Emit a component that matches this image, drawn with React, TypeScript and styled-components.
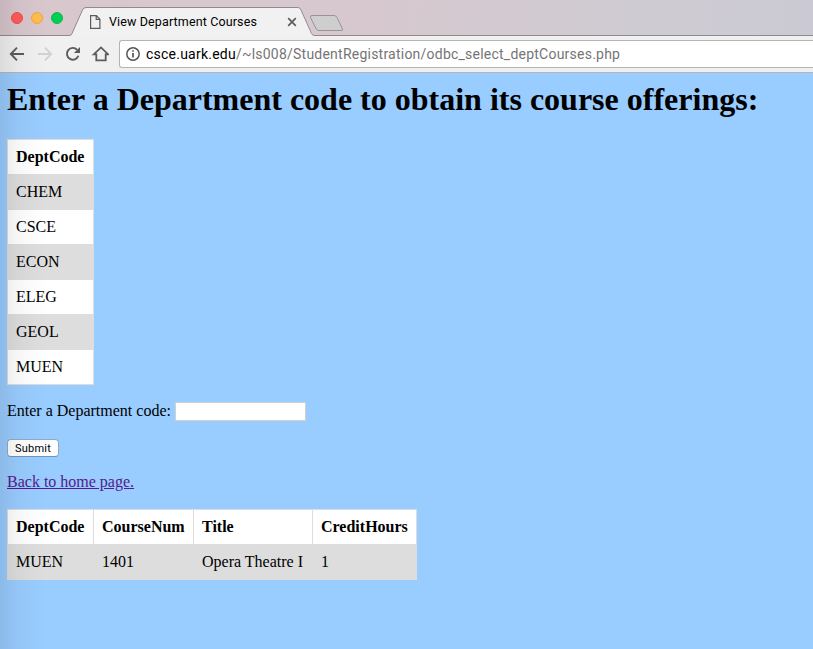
import React from "react";
import styled, { createGlobalStyle } from "styled-components";

const GlobalStyle = createGlobalStyle`
  * { box-sizing: border-box; }
  html, body { margin: 0; padding: 0; overflow: hidden; }
  body { background: #99ccff; }
`;

const Window = styled.div`
  position: relative;
  display: flex;
  flex-direction: column;
  width: 813px;
  height: 649px;
  overflow: hidden;
  color: #000;
  font: 16px/18px "Liberation Serif", "Times New Roman", serif;
  background: #99ccff;
`;

const EdgeShadow = styled.div`
  position: absolute;
  inset: 0 auto 0 0;
  width: 48px;
  pointer-events: none;
  background: linear-gradient(to right, rgba(0, 0, 0, 0.085), rgba(0, 0, 0, 0.035) 35%, rgba(0, 0, 0, 0.01) 70%, transparent);
`;

const TabStrip = styled.header`
  position: relative;
  display: flex;
  flex: none;
  height: 36px;
  background: linear-gradient(100deg, #d8c7cd 0%, #d7c8cf 45%, #cfcbd2 78%, #cbcad4 100%);
`;

const TabShapes = styled.svg`
  position: absolute;
  inset: 0;
`;

const Lights = styled.div`
  display: flex;
  gap: 8px;
  width: 90px;
  padding: 12px 0 0 11px;
`;

const Light = styled.i<{ $fill: string; $ring: string }>`
  width: 12px;
  height: 12px;
  border: 1px solid ${(p) => p.$ring};
  border-radius: 50%;
  background: ${(p) => p.$fill};
`;

const Tab = styled.div`
  position: relative;
  display: flex;
  width: 212px;
  padding-top: 14px;
`;

const TabTitle = styled.span`
  width: 178px;
  margin-left: 8px;
  font: 12.5px/16px Roboto, sans-serif;
  letter-spacing: 0.13px;
  white-space: nowrap;
`;

const Toolbar = styled.nav`
  display: flex;
  flex: none;
  height: 37px;
  padding: 4px 0 0 9px;
  border-bottom: 1px solid #b7b5b5;
  background: #f1f0f1;
`;

const NavIcons = styled.svg`
  flex: none;
  margin-right: 10px;
`;

const AddressBar = styled.div`
  display: flex;
  flex: 1;
  height: 28px;
  padding: 6px 0 0 6px;
  border: 1px solid #b5b4b5;
  border-right: 0;
  border-radius: 3px 0 0 3px;
  background: #fff;
`;

const Url = styled.span`
  margin: -1px 0 0 6px;
  color: #757575;
  font: 14px/16px Roboto, sans-serif;
  letter-spacing: 0.23px;
  white-space: nowrap;
`;

const Host = styled.span`
  color: #000;
`;

const Page = styled.main`
  display: flex;
  flex-direction: column;
  align-items: flex-start;
  padding: 8px 0 0 7px;
`;

const Heading = styled.h1`
  margin: 0 0 21px;
  font-size: 32px;
  line-height: 37px;
  white-space: nowrap;
`;

const Table = styled.table<{ $width: number }>`
  width: ${(p) => p.$width}px;
  border-collapse: collapse;
  table-layout: fixed;
`;

const Col = styled.col<{ $width: number }>`
  width: ${(p) => p.$width}px;
`;

const Row = styled.tr<{ $shaded?: boolean }>`
  height: 35px;
  background: ${(p) => (p.$shaded ? "#dddddd" : "#ffffff")};
`;

const cell = `
  padding: 8px;
  border: 1px solid #dddddd;
  text-align: left;
  white-space: nowrap;
`;
const HeadCell = styled.th`${cell}`;
const Cell = styled.td`${cell}`;

const Form = styled.form`
  display: flex;
  flex-direction: column;
  align-items: flex-start;
  margin-top: 17px;
`;

const Field = styled.label`
  display: flex;
  gap: 4px;
  height: 19px;
`;

const FieldLabel = styled.span`
  width: 164px;
  white-space: nowrap;
`;

const Input = styled.input`
  width: 131px;
  height: 19px;
  padding: 1px;
  border: 1px solid #d0d0d0;
  border-radius: 0;
  background: #fff;
`;

const Submit = styled.button`
  width: 52px;
  height: 18px;
  margin-top: 18px;
  padding: 0;
  border: 1px solid #8caccd;
  border-bottom-color: #6f95bb;
  border-radius: 4px;
  color: #000;
  background: #fff;
  font: 11px/15px Roboto, sans-serif;
  letter-spacing: 0.25px;
`;

const HomeLink = styled.a`
  margin: 16px 0 18px;
  color: #551a8b;
  text-decoration: underline;
`;

function DataTable({ columns, rows }: { columns: [string, number][]; rows: string[][] }) {
  return (
    <Table $width={columns.reduce((sum, c) => sum + c[1], 1)}>
      <colgroup>
        {columns.map(([name, width]) => <Col key={name} $width={width} />)}
      </colgroup>
      <thead>
        <Row>{columns.map(([name]) => <HeadCell key={name}>{name}</HeadCell>)}</Row>
      </thead>
      <tbody>
        {rows.map((row, i) => (
          <Row key={row[0]} $shaded={i % 2 === 0}>
            {row.map((value) => <Cell key={value}>{value}</Cell>)}
          </Row>
        ))}
      </tbody>
    </Table>
  );
}

export default function App() {
  return (
    <Window>
      <GlobalStyle />
      <TabStrip>
        <TabShapes width="813" height="36" fill="none">
          <path d="M71 36L82.5 10Q83.5 7.5 86 7.5H298Q300 7.5 301 10L313 36Z" fill="#f2f1f2" />
          <path d="M0 35.5H69Q71 35.5 72 33.5L82.5 10Q83.5 7.5 86 7.5H298Q300 7.5 301 10L311.5 33.5Q312.5 35.5 314.5 35.5H813" stroke="#918b8e" />
          <path d="M312 15.5H334Q336 15.5 337 17.5L342.5 29Q343 30.5 341 30.5H319Q317 30.5 316 28.5L310.5 17.5Q310 15.5 312 15.5Z" fill="#cfcece" stroke="#98929a" />
        </TabShapes>
        <Lights>
          <Light $fill="#ff5b5a" $ring="#e94d4d" />
          <Light $fill="#ffbd4c" $ring="#eda63b" />
          <Light $fill="#00cf55" $ring="#0cb847" />
        </Lights>
        <Tab>
          <svg width="11" height="16" fill="none" stroke="#5b5b5b" strokeWidth="1.2">
            <path d="M.6 1.6H6.4L9.9 5.2V14.4H.6ZM6.2 1.8V5.4H9.8" />
          </svg>
          <TabTitle>View Department Courses</TabTitle>
          <svg width="10" height="16" stroke="#5c5c5c" strokeWidth="1.7">
            <path d="M1.2 4.2L8.8 11.8M8.8 4.2L1.2 11.8" />
          </svg>
        </Tab>
      </TabStrip>
      <Toolbar>
        <NavIcons width="100" height="28" fill="none" stroke="#5c5c5c" strokeWidth="1.9">
          <path d="M15 14H2.5M8 7.7L1.8 14L8 20.3" />
          <path d="M29 14H41.5M36 7.7L42.2 14L36 20.3" stroke="#d2d1d2" />
          <path d="M68.2 9.8A5.9 5.9 0 1 0 69.4 15.8" />
          <path d="M71 6.9V13H64.9Z" fill="#5c5c5c" stroke="none" />
          <path d="M84.8 14.4L92 7.4L99.2 14.4H96.7V20.4H87.3V14.4Z" strokeWidth="1.8" />
        </NavIcons>
        <AddressBar>
          <svg width="14" height="14" fill="none" stroke="#555" strokeWidth="1.5">
            <circle cx="7" cy="7" r="6.2" />
            <path d="M7 6V10.5M7 3.3V4.8" strokeWidth="1.7" />
          </svg>
          <Url><Host>csce.uark.edu</Host>/~ls008/StudentRegistration/odbc_select_deptCourses.php</Url>
        </AddressBar>
      </Toolbar>
      <Page>
        <Heading>Enter a Department code to obtain its course offerings:</Heading>
        <DataTable
          columns={[["DeptCode", 86]]}
          rows={[["CHEM"], ["CSCE"], ["ECON"], ["ELEG"], ["GEOL"], ["MUEN"]]}
        />
        <Form onSubmit={(e) => e.preventDefault()}>
          <Field>
            <FieldLabel>Enter a Department code:</FieldLabel>
            <Input type="text" />
          </Field>
          <Submit type="submit">Submit</Submit>
        </Form>
        <HomeLink href="#">Back to home page.</HomeLink>
        <DataTable
          columns={[["DeptCode", 86], ["CourseNum", 100], ["Title", 119], ["CreditHours", 104]]}
          rows={[["MUEN", "1401", "Opera Theatre I", "1"]]}
        />
      </Page>
      <EdgeShadow />
    </Window>
  );
}
